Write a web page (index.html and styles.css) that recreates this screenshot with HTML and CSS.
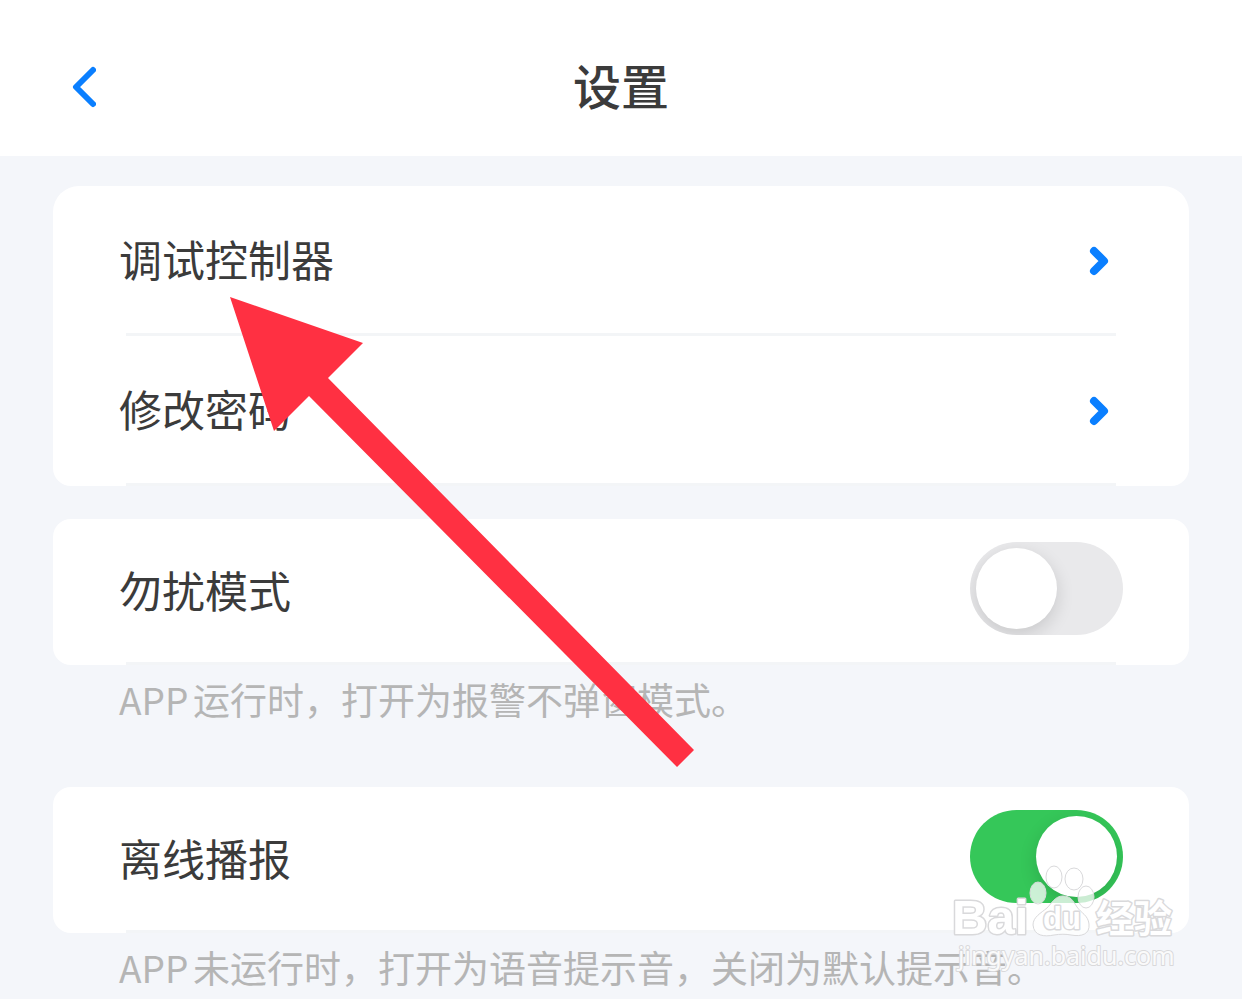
FILE: index.html
```html
<!DOCTYPE html>
<html lang="zh-CN">

	<head>
		<meta charset="UTF-8">
		<meta name="viewport" content="width=device-width">
		<title>设置</title>
		<link rel="stylesheet" href="styles.css">
	</head>

	<body>

		<header class="header">
			<button class="back" type="button" aria-label="返回">
				<svg width="24" height="42" viewBox="0 0 24 42">
					<path d="M21 4 L4 21 L21 38" />
				</svg>
			</button>
			<h1 class="title">设置</h1>
		</header>

		<main class="content">
			<section class="card card-first">
				<a class="row" href="#">
					<span class="label">调试控制器</span>
					<svg class="chevron" width="20" height="30" viewBox="0 0 20 30">
						<path d="M5 5 L15 15 L5 25" />
					</svg>
				</a>
				<a class="row" href="#">
					<span class="label">修改密码</span>
					<svg class="chevron" width="20" height="30" viewBox="0 0 20 30">
						<path d="M5 5 L15 15 L5 25" />
					</svg>
				</a>
			</section>

			<section class="card">
				<div class="row row-switch">
					<label class="label" for="quiet">勿扰模式</label>
					<input class="switch" type="checkbox" id="quiet">
				</div>
			</section>
			<p class="hint">APP运行时，打开为报警不弹窗模式。</p>

			<section class="card">
				<div class="row row-switch">
					<label class="label" for="offline">离线播报</label>
					<input class="switch" type="checkbox" id="offline" checked>
				</div>
			</section>
			<p class="hint">APP未运行时，打开为语音提示音，关闭为默认提示音。</p>
		</main>

		<!-- red pointer -->
		<svg class="pointer" width="464" height="470" viewBox="0 0 464 470">
			<path d="M0 0 L133 46 L98 81 L464 453 L447 470 L79 99 L44 134 Z" />
		</svg>

		<!-- watermark -->
		<svg class="mark" width="230" height="112" viewBox="0 0 230 112">
			<g class="paw">
				<ellipse cx="88" cy="31" rx="8" ry="11" />
				<ellipse cx="104" cy="15" rx="8" ry="11" />
				<ellipse cx="124" cy="17" rx="9" ry="11" />
				<ellipse cx="136" cy="35" rx="8" ry="11" />
				<path d="M113 34 C105 34 102 41 97 46 C91 51 83 55 83 63 C84 74 94 75 104 73 C110 72 116 72 121 73 C132 75 140 72 139 62 C138 53 131 51 127 45 C123 39 121 34 113 34 Z" />
			</g>
			<text class="mark-name" x="2" y="72">Bai</text>
			<text class="mark-du" x="93" y="67">du</text>
			<text class="mark-cn" x="146" y="70">经验</text>
			<text class="mark-url" x="8" y="103">jingyan.baidu.com</text>
		</svg>

	</body>

</html>
```
FILE: styles.css
```css
* {
	margin: 0;
	padding: 0;
	box-sizing: border-box;
}

body {
	position: relative;
	min-height: 100vh;
	overflow-x: hidden;
	background-color: #f4f6fa;
	color: #3b3b3b;
	font-family: "Noto Sans CJK SC", sans-serif;
}

.header {
	display: grid;
	grid-template-columns: 1fr auto 1fr;
	align-items: center;
	height: 156px;
	padding: 18px 72px 0;
	background-color: #fff;
}

.back {
	justify-self: start;
	display: flex;
	border: none;
	background: none;
}

.back path,
.chevron path {
	fill: none;
	stroke: #0a7fff;
	stroke-width: 6;
	stroke-linecap: round;
	stroke-linejoin: round;
}

.title {
	padding-bottom: 6px;
	font-size: 48px;
	line-height: 72px;
	font-weight: 500;
}

.content {
	padding: 30px 53px 0;
}

.card {
	margin-bottom: 33px;
	border-radius: 18px;
	background-color: #fff;
}

.card-first {
	border-radius: 26px 26px 18px 18px;
}

.row {
	display: flex;
	align-items: center;
	justify-content: space-between;
	height: 150px;
	padding: 0 66px;
	color: inherit;
	font-size: 43px;
	line-height: 64px;
	text-decoration: none;
	/* divider inset from both sides of the card */
	background: linear-gradient(#f3f5f7, #f3f5f7) center bottom / calc(100% - 146px) 3px no-repeat;
}

.row-switch {
	height: 146px;
}

.label {
	padding-bottom: 6px;
}

.chevron {
	margin-right: 14px;
}

.chevron path {
	stroke-width: 8;
}

.switch {
	appearance: none;
	display: flex;
	width: 153px;
	height: 93px;
	margin-bottom: 8px;
	padding: 6px;
	border-radius: 47px;
	background-color: #e9e9eb;
	overflow: hidden;
}

.switch::before {
	content: "";
	width: 81px;
	height: 81px;
	border-radius: 50%;
	background-color: #fff;
	box-shadow: 0 6px 18px rgba(0, 0, 0, 0.14);
}

.switch:checked {
	justify-content: flex-end;
	background-color: #35c759;
}

.hint {
	margin: -33px 66px 62px;
	padding-top: 8px;
	color: #b5b5b5;
	font-size: 37px;
	line-height: 52px;
	white-space: nowrap;
	text-autospace: normal;
}

.hint:last-child {
	margin-bottom: 0;
}

.pointer {
	position: absolute;
	left: 230px;
	top: 297px;
	fill: #ff3042;
	pointer-events: none;
}

.mark {
	position: absolute;
	right: 62px;
	top: 862px;
	fill: rgba(255, 255, 255, 0.75);
	stroke: #d9d9db;
	stroke-width: 1;
	pointer-events: none;
}

.mark text {
	fill: #fff;
	font-weight: 700;
	paint-order: stroke;
	stroke-width: 3;
	stroke-linejoin: round;
}

.mark .mark-name {
	font-family: "Liberation Sans", sans-serif;
	font-size: 49px;
}

.mark .mark-du {
	font-family: "Liberation Sans", sans-serif;
	font-size: 31px;
}

.mark .mark-cn {
	font-family: "Noto Sans CJK SC", sans-serif;
	font-size: 38px;
}

.mark .mark-url {
	fill: rgba(255, 255, 255, 0.9);
	font-family: "Noto Sans", sans-serif;
	font-size: 25px;
	font-weight: 400;
	stroke-width: 2;
}
```
